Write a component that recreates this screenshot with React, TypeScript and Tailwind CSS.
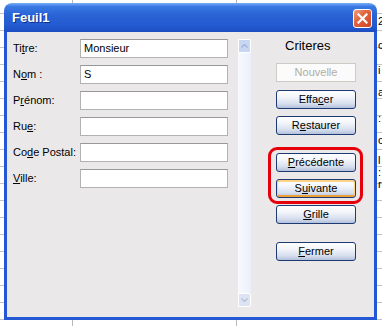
const fields = [
  { label: "Titre:", u: 2, value: "Monsieur" },
  { label: "Nom :", u: 1, value: "S" },
  { label: "Prénom:", u: 1, value: "" },
  { label: "Rue:", u: 2, value: "" },
  { label: "Code Postal:", u: 2, value: "" },
  { label: "Ville:", u: 0, value: "" },
];

// bits of spreadsheet text peeking out right of the dialog
const peek = [
  { ch: "2", h: "h-[24px]" },
  { ch: "c", h: "h-[24px]" },
  { ch: "i", h: "h-[25px]" },
  { ch: "a", h: "h-[22px]" },
  { ch: ":", h: "h-[26px]" },
  { ch: "c", h: "h-[22px]" },
  { ch: "l", h: "h-[20px]" },
  { ch: ":", h: "h-[12px]" },
  { ch: "r", h: "h-[12px]" },
];

function Mn({ text, u }: { text: string; u: number }) {
  return (
    <>
      {text.slice(0, u)}
      <span className="underline underline-offset-[1px]">{text[u]}</span>
      {text.slice(u + 1)}
    </>
  );
}

function Btn({
  text,
  u,
  focus,
}: {
  text: string;
  u: number;
  focus?: boolean;
}) {
  return (
    <div
      className={
        "h-[19px] w-[80px] rounded-[3px] border border-[#1d3a73] bg-[linear-gradient(to_bottom,#ffffff_0%,#f3f5fa_35%,#d7dfee_75%,#b3c0dc_100%)] flex items-center justify-center text-[11px] leading-none text-black " +
        (focus
          ? "shadow-[inset_0_1px_0_1px_#fbd48a,inset_0_-1px_0_1px_#ec9f34]"
          : "")
      }
    >
      <span>
        <Mn text={text} u={u} />
      </span>
    </div>
  );
}

export default function App() {
  return (
    <div className="w-[382px] h-[326px] overflow-hidden flex pl-[4px] pt-[3px] bg-white bg-[linear-gradient(to_right,transparent_72px,#b9b9b9_72px,#b9b9b9_73px,transparent_73px,transparent_236px,#b9b9b9_236px,#b9b9b9_237px,transparent_237px),repeating-linear-gradient(to_bottom,transparent_0px,transparent_13px,#c2c2c2_13px,#c2c2c2_14px,transparent_14px,transparent_17px)] font-['Liberation_Sans',Arial,sans-serif]">
      <div className="w-[373px] h-[317px] flex flex-col rounded-t-[8px] overflow-hidden shrink-0">
        {/* title bar */}
        <div className="h-[29px] flex items-center justify-between pl-[8px] pr-[5px] bg-[linear-gradient(to_bottom,#79aef5_0%,#3a7ae3_12%,#2a64d6_40%,#255bd1_75%,#1c4ec2_100%)]">
          <span className="text-white font-bold text-[13px] leading-none mt-[-1px] [text-shadow:1px_1px_0_#0b2f8a]">
            Feuil1
          </span>
          <div className="w-[19px] h-[19px] mt-[1px] rounded-[3px] border border-white bg-[linear-gradient(135deg,#f0a080_0%,#e2653f_40%,#cf4520_100%)] flex items-center justify-center">
            <svg width="11" height="11" viewBox="0 0 11 11">
              <path
                d="M1.5 1.5 L9.5 9.5 M9.5 1.5 L1.5 9.5"
                stroke="white"
                strokeWidth="2.2"
                strokeLinecap="square"
              />
            </svg>
          </div>
        </div>

        {/* body */}
        <div className="flex-1 border-x-[3px] border-b-[3px] border-[#2357d3] bg-[#ebe8ea] flex pl-[6px] pt-[7px] text-[11px] text-black">
          <div className="flex flex-col gap-[7px]">
            {fields.map((f) => (
              <div key={f.label} className="flex items-center h-[19px]">
                <span className="w-[67px] leading-none">
                  <Mn text={f.label} u={f.u} />
                </span>
                <div className="w-[148px] h-[19px] bg-white border border-[#b2b2b2] border-t-[#989898] flex items-center pl-[3px] leading-none">
                  {f.value}
                </div>
              </div>
            ))}
          </div>

          {/* scrollbar */}
          <div className="ml-[10px] w-[13px] h-[268px] flex flex-col justify-between bg-[linear-gradient(to_right,#f7f9fe,#eaf0fb)]">
            <div className="h-[14px] rounded-[2px] border border-white bg-[#c9d6f2] flex items-center justify-center">
              <svg width="7" height="4" viewBox="0 0 7 4">
                <path d="M0.5 3.5 L3.5 0.5 L6.5 3.5" stroke="#9fb0d6" strokeWidth="1.2" fill="none" />
              </svg>
            </div>
            <div className="h-[14px] rounded-[2px] border border-white bg-[#dde3f2] flex items-center justify-center">
              <svg width="7" height="4" viewBox="0 0 7 4">
                <path d="M0.5 0.5 L3.5 3.5 L6.5 0.5" stroke="#b3bfd9" strokeWidth="1.2" fill="none" />
              </svg>
            </div>
          </div>

          {/* right column */}
          <div className="ml-[25px] w-[80px] flex flex-col">
            <div className="h-[14px] leading-[14px] pl-[9px] text-[13px]">Criteres</div>
            <div className="mt-[10px] h-[19px] w-[80px] border border-[#cdcbc6] bg-[#fbfbfb] flex items-center justify-center text-[11px] leading-none text-[#aeaca4]">
              Nouvelle
            </div>
            <div className="mt-[8px]">
              <Btn text="Effacer" u={4} />
            </div>
            <div className="mt-[7px]">
              <Btn text="Restaurer" u={1} />
            </div>
            <div className="mt-[18px] relative flex flex-col gap-[7px]">
              <Btn text="Précédente" u={0} />
              <Btn text="Suivante" u={1} focus />
              <div className="absolute -left-[8px] -right-[7px] -top-[6px] -bottom-[6px] border-[3px] border-[#e6000a] rounded-[9px]" />
            </div>
            <div className="mt-[7px]">
              <Btn text="Grille" u={0} />
            </div>
            <div className="mt-[18px]">
              <Btn text="Fermer" u={0} />
            </div>
          </div>
        </div>
      </div>

      <div className="w-[5px] pl-[1px] shrink-0 flex flex-col text-[11px] leading-none text-black overflow-hidden">
        {peek.map((p, i) => (
          <div key={i} className={p.h + " flex items-end"}>
            {p.ch}
          </div>
        ))}
      </div>
    </div>
  );
}
